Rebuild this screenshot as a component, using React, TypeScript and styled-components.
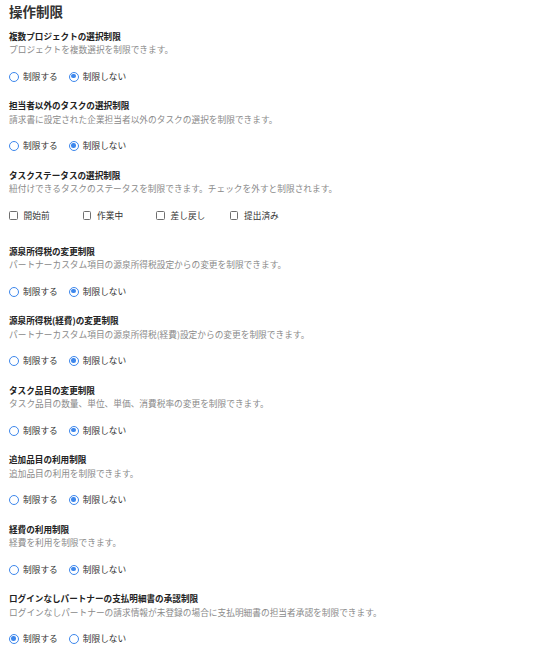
import React, { useState } from "react";
import styled, { createGlobalStyle } from "styled-components";

interface IOption {
  key: string;
  label: string;
}
interface ISetting {
  key: string;
  title: string;
  note: string;
  kind: "radio" | "check";
  value?: string;
  checks?: IOption[];
}

const GlobalStyle = createGlobalStyle`
  html, body {
    margin: 0;
    padding: 0;
    background: #ffffff;
  }
  body {
    font-family: "Noto Sans CJK JP", "Noto Sans", "Liberation Sans", sans-serif;
    color: #333333;
  }
`;

const Page = styled.div`
  padding: 0 9px;
  width: 542px;
  box-sizing: border-box;
`;

const Title = styled.h1`
  margin: 0;
  font-size: 13.5px;
  line-height: 22px;
  font-weight: 700;
  color: #333333;
`;

const Section = styled.section<{ $extra?: boolean }>`
  display: flex;
  flex-direction: column;
  padding-top: 7.5px;
  padding-bottom: ${(p) => (p.$extra ? "15.5px" : "9px")};
`;

const Heading = styled.h2`
  margin: 0;
  font-size: 8.6px;
  line-height: 12px;
  font-weight: 700;
  color: #222222;
`;

const Note = styled.p`
  margin: 2.5px 0 0;
  font-size: 8.7px;
  line-height: 12px;
  color: #8a8a8a;
`;

const Options = styled.div`
  display: flex;
  align-items: center;
  margin-top: 14.5px;
  height: 12px;
`;

const Choice = styled.label`
  display: flex;
  align-items: center;
  gap: 4px;
  margin-right: 11px;
  font-size: 8.7px;
  line-height: 12px;
  color: #333333;
  cursor: pointer;
`;

const Radio = styled.span<{ $on: boolean }>`
  position: relative;
  width: 10px;
  height: 10px;
  border-radius: 50%;
  border: 1.5px solid #3d87ec;
  box-sizing: border-box;
  flex-shrink: 0;
  &::after {
    content: "";
    display: ${(p) => (p.$on ? "block" : "none")};
    position: absolute;
    left: 1.25px;
    top: 1.25px;
    width: 4.5px;
    height: 4.5px;
    border-radius: 50%;
    background: #3d87ec;
  }
`;

const CheckItem = styled.label`
  display: flex;
  align-items: center;
  gap: 6px;
  width: 73.5px;
  font-size: 8.7px;
  line-height: 12px;
  color: #333333;
  cursor: pointer;
`;

const Box = styled.span<{ $on: boolean }>`
  width: 8.5px;
  height: 8.5px;
  border: 1px solid #6f6f6f;
  border-radius: 1.5px;
  box-sizing: border-box;
  flex-shrink: 0;
  background: ${(p) => (p.$on ? "#3d87ec" : "#ffffff")};
`;

const settings: ISetting[] = [
  {
    key: "multi",
    title: "複数プロジェクトの選択制限",
    note: "プロジェクトを複数選択を制限できます。",
    kind: "radio",
    value: "off"
  },
  {
    key: "owner",
    title: "担当者以外のタスクの選択制限",
    note: "請求書に設定された企業担当者以外のタスクの選択を制限できます。",
    kind: "radio",
    value: "off"
  },
  {
    key: "status",
    title: "タスクステータスの選択制限",
    note: "紐付けできるタスクのステータスを制限できます。チェックを外すと制限されます。",
    kind: "check",
    checks: [
      { key: "before", label: "開始前" },
      { key: "doing", label: "作業中" },
      { key: "back", label: "差し戻し" },
      { key: "sent", label: "提出済み" }
    ]
  },
  {
    key: "tax",
    title: "源泉所得税の変更制限",
    note: "パートナーカスタム項目の源泉所得税設定からの変更を制限できます。",
    kind: "radio",
    value: "off"
  },
  {
    key: "taxCost",
    title: "源泉所得税(経費)の変更制限",
    note: "パートナーカスタム項目の源泉所得税(経費)設定からの変更を制限できます。",
    kind: "radio",
    value: "off"
  },
  {
    key: "item",
    title: "タスク品目の変更制限",
    note: "タスク品目の数量、単位、単価、消費税率の変更を制限できます。",
    kind: "radio",
    value: "off"
  },
  {
    key: "extra",
    title: "追加品目の利用制限",
    note: "追加品目の利用を制限できます。",
    kind: "radio",
    value: "off"
  },
  {
    key: "cost",
    title: "経費の利用制限",
    note: "経費を利用を制限できます。",
    kind: "radio",
    value: "off"
  },
  {
    key: "approve",
    title: "ログインなしパートナーの支払明細書の承認制限",
    note: "ログインなしパートナーの請求情報が未登録の場合に支払明細書の担当者承認を制限できます。",
    kind: "radio",
    value: "on"
  }
];

export default function App() {
  const [values, setValues] = useState<Record<string, string>>(() =>
    Object.fromEntries(settings.map((s) => [s.key, s.value || ""]))
  );
  const [checked, setChecked] = useState<Record<string, boolean>>({});

  return (
    <Page>
      <GlobalStyle />
      <Title>操作制限</Title>
      {settings.map((s) => (
        <Section key={s.key} $extra={s.kind === "check"}>
          <Heading>{s.title}</Heading>
          <Note>{s.note}</Note>
          {s.kind === "radio" ? (
            <Options>
              {[
                { key: "on", label: "制限する" },
                { key: "off", label: "制限しない" }
              ].map((o) => (
                <Choice
                  key={o.key}
                  onClick={() => setValues({ ...values, [s.key]: o.key })}
                >
                  <Radio $on={values[s.key] === o.key} />
                  {o.label}
                </Choice>
              ))}
            </Options>
          ) : (
            <Options>
              {s.checks?.map((c) => (
                <CheckItem
                  key={c.key}
                  onClick={() =>
                    setChecked({ ...checked, [c.key]: !checked[c.key] })
                  }
                >
                  <Box $on={!!checked[c.key]} />
                  {c.label}
                </CheckItem>
              ))}
            </Options>
          )}
        </Section>
      ))}
    </Page>
  );
}
